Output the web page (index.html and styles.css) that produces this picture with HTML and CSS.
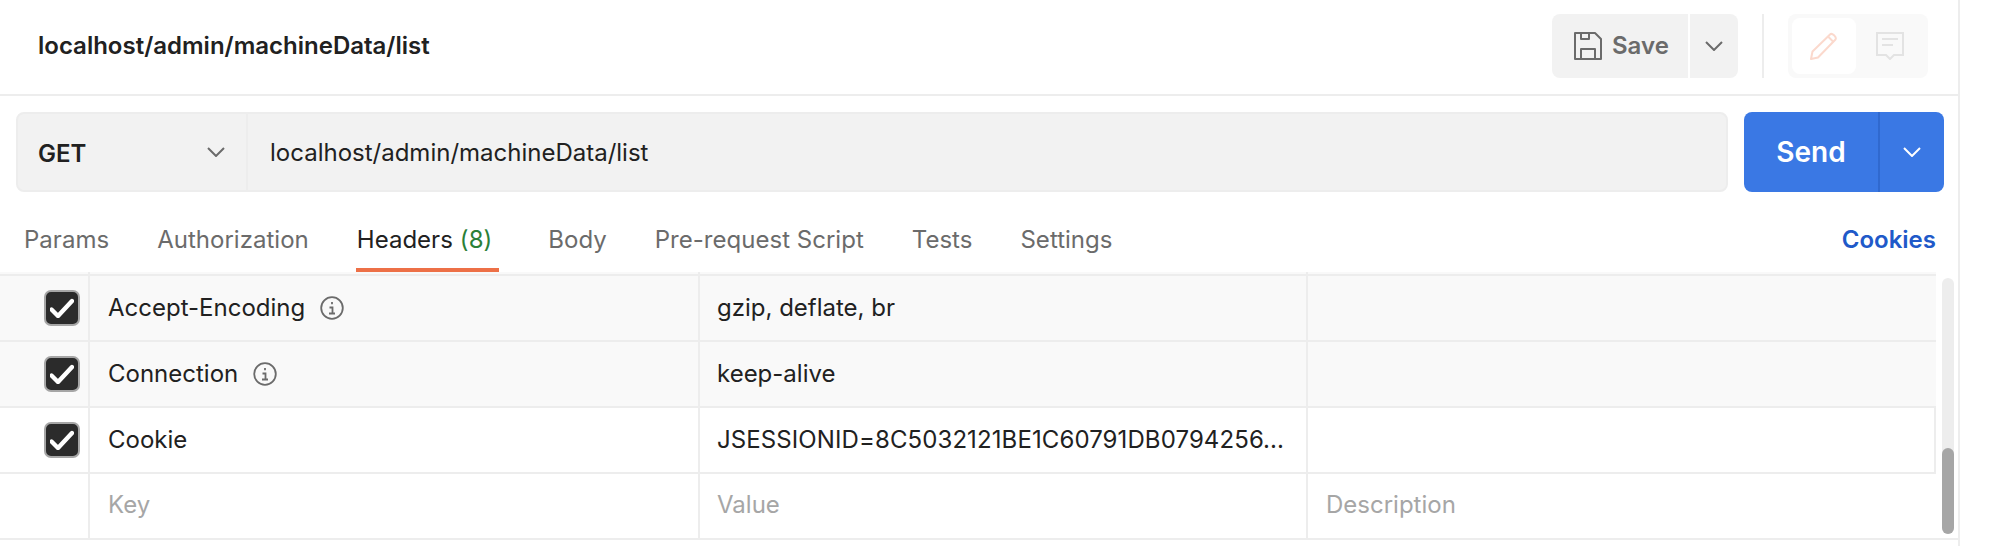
FILE: index.html
```html
<!DOCTYPE html>
<html lang="en">
<head>
    <meta charset="UTF-8">
    <title>localhost/admin/machineData/list</title>
    <link rel="stylesheet" href="styles.css">
</head>
<body>
    <div class="panel">
        <header class="topbar">
            <h1 class="title">localhost/admin/machineData/list</h1>
            <div class="actions">
                <button class="btn-save">
                    <svg class="icon-save" viewBox="0 0 28 28" width="28" height="28" fill="none" stroke="#6b6b6b" stroke-width="2" stroke-linejoin="round">
                        <path d="M1 1H21L27 7V27H1Z"/>
                        <path d="M7 1V7H15V1"/>
                        <path d="M7 27V17H21V27"/>
                    </svg>
                    Save
                </button>
                <button class="btn-save-more">
                    <svg viewBox="0 0 18 10" width="18" height="10" fill="none" stroke="#6b6b6b" stroke-width="2"><path d="M1 1L9 9L17 1"/></svg>
                </button>
                <div class="vline"></div>
                <div class="toggle">
                    <div class="toggle-item active">
                        <svg viewBox="0 0 28 28" width="28" height="28" fill="none" stroke="#fbd9cd" stroke-width="2" stroke-linejoin="round">
                            <path d="M1 27L2.5 19.5L20 2.5C22 0.5 27 5 25.5 7.5L8 25.5Z"/>
                            <path d="M18 4.5L23.5 10"/>
                        </svg>
                    </div>
                    <div class="toggle-item">
                        <svg viewBox="0 0 28 28" width="28" height="28" fill="none" stroke="#e3e3e3" stroke-width="2">
                            <path d="M1 1H27V23H18L14 27L10 23H1Z"/>
                            <path d="M6 7H22M6 13H17"/>
                        </svg>
                    </div>
                </div>
            </div>
        </header>

        <div class="urlrow">
            <div class="urlbox">
                <div class="method">
                    <span>GET</span>
                    <svg viewBox="0 0 18 10" width="18" height="10" fill="none" stroke="#6b6b6b" stroke-width="2"><path d="M1 1L9 9L17 1"/></svg>
                </div>
                <div class="url">localhost/admin/machineData/list</div>
            </div>
            <div class="send">
                <div class="send-label">Send</div>
                <div class="send-more">
                    <svg viewBox="0 0 18 10" width="18" height="10" fill="none" stroke="#fff" stroke-width="2"><path d="M1 1L9 9L17 1"/></svg>
                </div>
            </div>
        </div>

        <nav class="tabs">
            <a class="tab">Params</a>
            <a class="tab">Authorization</a>
            <a class="tab current">Headers <span class="count">(8)</span></a>
            <a class="tab">Body</a>
            <a class="tab">Pre-request Script</a>
            <a class="tab">Tests</a>
            <a class="tab">Settings</a>
            <a class="cookies">Cookies</a>
        </nav>

        <div class="tablewrap">
            <div class="table">
                <!-- row scrolled out of view, only its last pixels show -->
                <div class="row auto stub">
                    <div class="cell check"></div>
                    <div class="cell key"></div>
                    <div class="cell value"></div>
                    <div class="cell desc"></div>
                </div>
                <div class="row auto">
                    <div class="cell check"><span class="box"><svg viewBox="0 0 24 20" width="24" height="20" fill="none" stroke="#fff" stroke-width="4.4" stroke-linecap="round" stroke-linejoin="round"><path d="M1.5 11.5L8 18L22 3"/></svg></span></div>
                    <div class="cell key">Accept-Encoding
                        <svg class="info" viewBox="0 0 24 24" width="24" height="24" fill="none" stroke="#6b6b6b" stroke-width="1.8"><circle cx="12" cy="12" r="10.8"/><path d="M12 6V8.2M9.5 11.5H12.5V17M9 17.5H15"/></svg>
                    </div>
                    <div class="cell value">gzip, deflate, br</div>
                    <div class="cell desc"></div>
                </div>
                <div class="row auto">
                    <div class="cell check"><span class="box"><svg viewBox="0 0 24 20" width="24" height="20" fill="none" stroke="#fff" stroke-width="4.4" stroke-linecap="round" stroke-linejoin="round"><path d="M1.5 11.5L8 18L22 3"/></svg></span></div>
                    <div class="cell key">Connection
                        <svg class="info" viewBox="0 0 24 24" width="24" height="24" fill="none" stroke="#6b6b6b" stroke-width="1.8"><circle cx="12" cy="12" r="10.8"/><path d="M12 6V8.2M9.5 11.5H12.5V17M9 17.5H15"/></svg>
                    </div>
                    <div class="cell value">keep-alive</div>
                    <div class="cell desc"></div>
                </div>
                <div class="row hover">
                    <div class="cell check"><span class="box"><svg viewBox="0 0 24 20" width="24" height="20" fill="none" stroke="#fff" stroke-width="4.4" stroke-linecap="round" stroke-linejoin="round"><path d="M1.5 11.5L8 18L22 3"/></svg></span></div>
                    <div class="cell key">Cookie</div>
                    <div class="cell value long">JSESSIONID=8C5032121BE1C60791DB0794256...</div>
                    <div class="cell desc"></div>
                </div>
                <div class="row empty">
                    <div class="cell check"></div>
                    <div class="cell key">Key</div>
                    <div class="cell value">Value</div>
                    <div class="cell desc">Description</div>
                </div>
            </div>
            <div class="scrollbar"><div class="thumb"></div></div>
        </div>
    </div>
</body>
</html>
```

FILE: styles.css
```css
* {
    box-sizing: border-box;
}

html, body {
    margin: 0;
    padding: 0;
    height: 100%;
    background: #fff;
}

body {
    font-family: Inter, "Noto Sans", sans-serif;
    font-size: 24px;
    color: #212121;
    overflow: hidden;
}

button {
    font-family: inherit;
    border: none;
    padding: 0;
}

.panel {
    width: 1960px;
    height: 546px;
    border-right: 2px solid #ededed;
}

.topbar {
    height: 96px;
    padding: 14px 30px 16px 38px;
    border-bottom: 2px solid #ededed;
    display: flex;
    align-items: center;
    justify-content: space-between;
}

.title {
    margin: 0 0 2px;
    font-size: 24px;
    font-weight: 600;
}

.actions {
    display: flex;
    align-items: stretch;
    height: 64px;
}

.btn-save {
    width: 136px;
    padding: 0 0 2px 22px;
    background: #f2f2f2;
    color: #6b6b6b;
    font-size: 24px;
    font-weight: 600;
    border-radius: 8px 0 0 8px;
    display: flex;
    align-items: center;
    gap: 10px;
}

.icon-save {
    margin-top: 2px;
}

.btn-save-more {
    width: 48px;
    margin-left: 2px;
    background: #f2f2f2;
    border-radius: 0 8px 8px 0;
    display: flex;
    align-items: center;
    justify-content: center;
}

.vline {
    width: 2px;
    margin: 0 24px;
    background: #ededed;
}

.toggle {
    width: 140px;
    padding: 4px;
    background: #f9f9f9;
    border-radius: 8px;
    display: flex;
}

.toggle-item {
    width: 64px;
    border-radius: 8px;
    display: flex;
    align-items: center;
    justify-content: center;
}

.toggle-item + .toggle-item {
    width: 68px;
}

.toggle-item.active {
    background: #fff;
}

.urlrow {
    display: flex;
    gap: 16px;
    padding: 16px 14px 0 16px;
    height: 96px;
}

.urlbox {
    flex: 1;
    display: flex;
    background: #f2f2f2;
    border: 2px solid #ededed;
    border-radius: 8px;
}

.method {
    width: 230px;
    padding: 0 21px 0 20px;
    border-right: 2px solid #ededed;
    display: flex;
    align-items: center;
    justify-content: space-between;
    font-weight: 600;
}

.method span {
    margin-top: 2px;
}

.url {
    flex: 1;
    padding-left: 22px;
    display: flex;
    align-items: center;
}

.send {
    width: 200px;
    background: #3a78e4;
    color: #fff;
    border-radius: 8px;
    display: flex;
}

.send-label {
    width: 136px;
    border-right: 2px solid #3069cf;
    font-size: 28px;
    font-weight: 600;
    display: flex;
    align-items: center;
    justify-content: center;
}

.send-more {
    flex: 1;
    display: flex;
    align-items: center;
    justify-content: center;
}

.tabs {
    height: 80px;
    display: flex;
    padding: 18px 22px 0 24px;
    gap: 48px;
    color: #6b6b6b;
}

.tab {
    display: flex;
    align-items: center;
    gap: 7px;
    border-bottom: 4px solid transparent;
    letter-spacing: 0.02px;
}

.tab.current {
    color: #212121;
    border-bottom-color: #ed7047;
    padding: 0 7px 0 1px;
    margin: 0 1px 0 -1px;
}

.count {
    color: #2a8038;
}

.cookies {
    margin-left: auto;
    align-self: center;
    padding-bottom: 4px;
    color: #2059c9;
    font-weight: 600;
}

.tablewrap {
    display: flex;
    height: 268px;
    border-bottom: 2px solid #ededed;
}

.table {
    width: 1936px;
}

.row {
    height: 66px;
    display: flex;
    border-bottom: 2px solid #ededed;
}

.row.stub {
    height: 4px;
}

.row.auto {
    background: #f9f9f9;
}

.row.hover {
    border-right: 2px solid #ededed;
}

.row.empty {
    height: 64px;
    border-bottom: none;
    color: #a6a6a6;
}

.row.empty .cell {
    padding-bottom: 4px;
}

.cell {
    display: flex;
    align-items: center;
    padding-left: 18px;
    padding-bottom: 2px;
    border-right: 2px solid #ededed;
    white-space: nowrap;
}

.check {
    width: 90px;
    padding-left: 44px;
    padding-bottom: 0;
}

.key {
    width: 610px;
    gap: 15px;
}

.info {
    margin-top: 2px;
}

.value {
    width: 608px;
    padding-left: 17px;
}

.value.long {
    letter-spacing: 0.1px;
}

.desc {
    flex: 1;
    padding-left: 18px;
    border-right: none;
}

.box {
    width: 36px;
    height: 36px;
    background: #2b2b2b;
    border: 2px solid #a6a6a6;
    border-radius: 7px;
    display: flex;
    align-items: center;
    justify-content: center;
}

.scrollbar {
    width: 12px;
    height: 256px;
    margin: 6px 0 0 6px;
    background: #ededed;
    border-radius: 6px;
    display: flex;
    align-items: flex-end;
}

.thumb {
    width: 12px;
    height: 86px;
    background: #a6a6a6;
    border-radius: 6px;
}
```
